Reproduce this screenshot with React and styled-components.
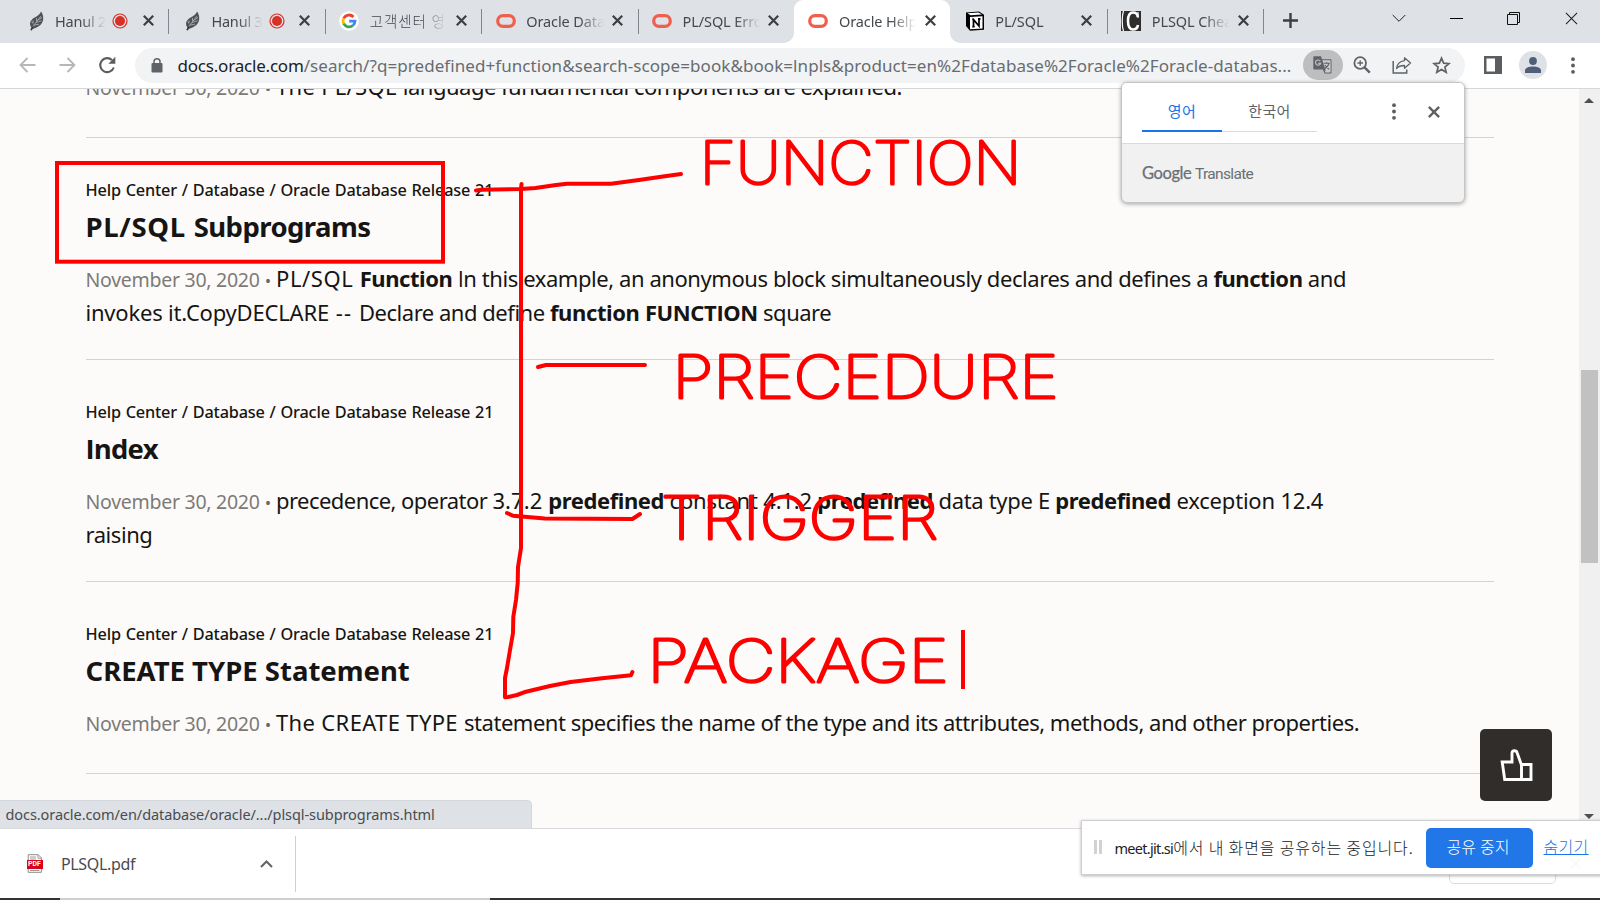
import React from "react";
import styled, { createGlobalStyle } from "styled-components";

const UI = `"Noto Sans", "Noto Sans CJK KR", sans-serif`;
const RED = "#ff0000";

const Global = createGlobalStyle`
  * { box-sizing: border-box; }
  html, body { margin: 0; padding: 0; overflow: hidden; }
  body { font-family: ${UI}; background: #fff; color: #161513; }
  svg { display: block; flex: none; }
`;

const Desktop = styled.div`
  position: relative;
  width: 1600px;
  height: 900px;
  display: flex;
  flex-direction: column;
  overflow: hidden;
  background: #fff;
`;

/* ---------- tab strip ---------- */
const TabStrip = styled.header`
  height: 43px;
  flex: none;
  display: flex;
  padding-left: 12px;
  background: #dee1e6;
`;

const TabBox = styled.div`
  position: relative;
  width: 156.4px;
  height: 43px;
  padding: 0 9px 2px 14px;
  display: flex;
  align-items: center;
  background: ${(p) => (p.$active ? "#fff" : "transparent")};
  border-radius: 9px 9px 0 0;
  &::before, &::after {
    content: "";
    display: ${(p) => (p.$active ? "block" : "none")};
    position: absolute;
    bottom: 0;
    width: 10px;
    height: 10px;
  }
  &::before { left: -10px; background: radial-gradient(circle at 0 0, transparent 9.5px, #fff 10px); }
  &::after { right: -10px; background: radial-gradient(circle at 100% 0, transparent 9.5px, #fff 10px); }
`;

const TabDivider = styled.i`
  position: absolute;
  right: -1px;
  top: 9px;
  width: 1px;
  height: 25px;
  background: #80868b;
`;

const Favicon = styled.span`
  width: 21px;
  height: 20px;
  display: flex;
  align-items: center;
  justify-content: center;
`;

const TabTitle = styled.span`
  flex: 1;
  min-width: 0;
  margin: 0 3px 0 ${(p) => (p.$tight ? 8 : 10)}px;
  overflow: hidden;
  white-space: nowrap;
  font-size: 14.5px;
  font-weight: ${(p) => (p.$korean ? 300 : 400)};
  letter-spacing: ${(p) => p.$ls || -0.1}px;
  line-height: 24px;
  color: #45494d;
  mask-image: linear-gradient(to right, #000 calc(100% - 25px), transparent);
`;

const TabRecording = styled.span`
  width: 16px;
  margin: 0 9px 0 3px;
`;

const TabClose = styled.span`
  width: 22px;
  display: flex;
  justify-content: center;
`;

const NewTab = styled.span`
  width: 55px;
  height: 41px;
  display: flex;
  align-items: center;
  justify-content: center;
`;

const WindowControls = styled.div`
  margin-left: auto;
  height: 36px;
  display: flex;
  align-items: center;
`;

const WindowButton = styled.span`
  width: 57.5px;
  height: 36px;
  display: flex;
  align-items: center;
  justify-content: center;
`;

/* ---------- toolbar ---------- */
const Toolbar = styled.div`
  height: 46px;
  flex: none;
  display: flex;
  align-items: center;
  padding: 0 7px 1px;
  background: #fff;
  border-bottom: 1px solid #d5d7da;
`;

const NavButton = styled.span`
  width: 40px;
  display: flex;
  justify-content: center;
`;

const Omnibox = styled.div`
  width: 1330px;
  flex: none;
  height: 35px;
  margin-left: 8px;
  padding: 0 3px 0 16px;
  display: flex;
  align-items: center;
  background: #f1f3f4;
  border-radius: 18px;
`;

const Url = styled.div`
  width: 1125px;
  margin-left: 14.5px;
  padding-top: 1px;
  white-space: nowrap;
  font-size: 17px;
  line-height: 30px;
  letter-spacing: 0.07px;
  color: #686c71;
`;

const Domain = styled.span`
  color: #202124;
  letter-spacing: -0.2px;
`;

const TranslatePill = styled.span`
  width: 40px;
  height: 30px;
  display: flex;
  align-items: center;
  justify-content: center;
  border-radius: 15px;
  background: #bdbebf;
`;

const OmniAction = styled.span`
  width: 39.6px;
  display: flex;
  justify-content: center;
`;

const ToolbarActions = styled.div`
  margin-left: 7.5px;
  display: flex;
  align-items: center;
`;

const ToolbarAction = styled.span`
  width: 40px;
  display: flex;
  justify-content: center;
`;

const Avatar = styled.span`
  width: 28px;
  height: 28px;
  margin: 0 6px;
  display: flex;
  align-items: center;
  justify-content: center;
  border-radius: 50%;
  background: #dee1e6;
`;

/* ---------- page ---------- */
const Viewport = styled.main`
  position: relative;
  height: 739px;
  flex: none;
  display: flex;
  overflow: hidden;
  background: #fcfbfa;
`;

const ResultList = styled.section`
  width: 1408px;
  margin: -20px 85px 0 86px;
  flex: none;
`;

const Result = styled.article`
  padding: ${(p) => (p.$first ? 0 : 42)}px 0 ${(p) => (p.$short ? 34 : 30)}px;
  border-bottom: 1px solid #d4d3d1;
`;

const Breadcrumb = styled.div`
  height: 20px;
  line-height: 20px;
  margin-left: -0.5px;
  font-size: 16.3px;
  font-weight: 500;
  letter-spacing: -0.18px;
  word-spacing: 0.8px;
  white-space: nowrap;
`;

const Title = styled.h2`
  height: 36px;
  margin: 9px 0 16px -0.5px;
  line-height: 36px;
  font-family: ${(p) => (p.$plain ? `"Open Sans", sans-serif` : UI)};
  font-size: 27.5px;
  font-weight: 700;
  letter-spacing: ${(p) => p.$ls || 0}px;
  white-space: nowrap;
`;

const Snippet = styled.p`
  margin: 0 0 0 -0.5px;
  font-size: 22px;
  line-height: 34px;
  white-space: pre;
`;

const DateText = styled.span`
  display: inline-block;
  width: 190.5px;
  font-size: 19.5px;
  line-height: 20px;
  letter-spacing: -0.27px;
  color: #7d7a76;
`;

const Dot = styled.span`
  margin-left: 5.5px;
  font-size: 16px;
  color: #6b6763;
`;

const Run = styled.span`
  letter-spacing: ${(p) => p.$ls || 0}px;
`;

const Match = styled.b`
  letter-spacing: ${(p) => p.$ls || 0}px;
`;

const PlainCap = styled.span`
  font-family: "Open Sans", sans-serif;
`;

const Scrollbar = styled.aside`
  width: 21px;
  height: 739px;
  display: flex;
  flex-direction: column;
  align-items: center;
  justify-content: space-between;
  padding: 9px 1px 9px 0;
  background: #f0f0f0;
`;

const Thumb = styled.i`
  width: 17px;
  height: 193px;
  margin-top: 16px;
  background: #c1c1c1;
`;

const Feedback = styled.div`
  position: absolute;
  left: 1480px;
  top: 640px;
  width: 72px;
  height: 72px;
  display: flex;
  align-items: center;
  justify-content: center;
  border-radius: 5px;
  background: #312d2a;
`;

const StatusBubble = styled.div`
  position: absolute;
  left: 0;
  bottom: 0;
  width: 532px;
  height: 28px;
  padding-left: 5.5px;
  border: solid #d3d6da;
  border-width: 1px 1px 0 0;
  border-radius: 0 5px 0 0;
  background: #dee1e6;
  font-size: 14.5px;
  line-height: 27px;
  letter-spacing: -0.075px;
  color: #494c50;
`;

/* ---------- downloads shelf ---------- */
const Shelf = styled.footer`
  height: 70px;
  flex: none;
  display: flex;
  align-items: center;
  border-top: 1px solid #d9dbde;
  background: #fff;
`;

const DownloadItem = styled.div`
  width: 296px;
  height: 56px;
  padding: 0 22px 0 27px;
  display: flex;
  align-items: center;
  border-right: 1px solid #cdcfd1;
`;

const FileName = styled.span`
  flex: 1;
  margin-left: 18px;
  font-size: 16px;
  letter-spacing: -0.35px;
  color: #484b4f;
`;

const ShowAll = styled.span`
  width: 107px;
  height: 40px;
  margin: 0 14px 0 auto;
  border: 1px solid #dadce0;
  border-radius: 5px;
  text-align: center;
  line-height: 34px;
  font-size: 15px;
  font-weight: 300;
  color: #1a73e8;
`;

const ShelfClose = styled.span`
  width: 30px;
`;

const DesktopEdge = styled.div`
  height: 2px;
  flex: none;
  background: linear-gradient(to right, #333436 60px, #cfcfcf 60px, #cfcfcf 490px, #333436 490px);
`;

/* ---------- translate popup ---------- */
const TranslatePopup = styled.section`
  position: absolute;
  left: 1121px;
  top: 82px;
  width: 344px;
  height: 121px;
  border: 1px solid #c4c6c6;
  border-radius: 6px;
  overflow: hidden;
  background: #f1f1f1;
  box-shadow: 0 1px 4px rgba(0, 0, 0, 0.35);
`;

const PopupHeader = styled.div`
  height: 61px;
  padding: 9px 24px 0 20px;
  display: flex;
  align-items: flex-start;
  background: #fff;
  border-bottom: 1px solid #d9dadb;
`;

const LangTab = styled.span`
  width: ${(p) => (p.$active ? 80 : 95)}px;
  height: 40px;
  text-align: center;
  line-height: 39px;
  font-size: 15px;
  letter-spacing: 0.4px;
  color: ${(p) => (p.$active ? "#1a73e8" : "#5f6368")};
  box-shadow: inset 0 ${(p) => (p.$active ? "-2px #1a73e8" : "-1px #dadce0")};
`;

const PopupActions = styled.span`
  margin: 11px 0 0 auto;
  display: flex;
  align-items: center;
  gap: 32px;
`;

const Brand = styled.div`
  padding: 16px 0 0 20px;
  font-family: Lato, sans-serif;
  font-size: 16.5px;
  line-height: 26px;
  letter-spacing: -0.4px;
  color: #6b6f73;
  -webkit-text-stroke: 0.25px #6b6f73;
`;

const BrandProduct = styled.span`
  margin-left: 3.5px;
  font-family: Roboto, sans-serif;
  font-size: 15.5px;
  letter-spacing: -0.65px;
  -webkit-text-stroke: 0;
`;

/* ---------- screen share bar ---------- */
const ShareBar = styled.div`
  position: absolute;
  left: 1081px;
  top: 820px;
  width: 530px;
  height: 55px;
  padding: 0 0 2px 12px;
  display: flex;
  align-items: center;
  background: rgba(255, 255, 255, 0.96);
  border: 1px solid #cfcfcf;
  box-shadow: 0 1px 3px rgba(0, 0, 0, 0.3);
`;

const Grip = styled.i`
  width: 8px;
  height: 14px;
  border: solid #d2d2d2;
  border-width: 0 3px;
`;

const ShareText = styled.span`
  width: 311px;
  margin-left: 12.5px;
  white-space: nowrap;
  font-family: "Noto Sans CJK KR", sans-serif;
  font-size: 16px;
  font-weight: 300;
  letter-spacing: 0.85px;
  color: #202124;
`;

const ShareHost = styled.span`
  font-family: "Noto Sans", sans-serif;
  font-size: 14.5px;
  font-weight: 400;
  letter-spacing: -0.7px;
`;

const StopButton = styled.span`
  width: 107px;
  height: 40px;
  margin-top: 2px;
  border-radius: 5px;
  background: #2277e8;
  color: #fff;
  padding-right: 2px;
  text-align: center;
  font-size: 16px;
  font-weight: 300;
  line-height: 38px;
`;

const HideLink = styled.span`
  margin: -1px 0 0 11px;
  font-size: 16px;
  font-weight: 300;
  letter-spacing: 0.3px;
  color: #1a73e8;
  text-decoration: underline;
`;

const Annotations = styled.svg`
  position: absolute;
  left: 0;
  top: 0;
  pointer-events: none;
`;

/* ---------- icons ---------- */
const Cross = ({ size = 11, color = "#3c4043", w = 2.2 }) => (
  <svg width={size} height={size} viewBox="0 0 11 11" stroke={color} strokeWidth={w} fill="none">
    <path d="M.8.8l9.4 9.4M10.2.8L.8 10.2" />
  </svg>
);

const Feather = () => (
  <svg width="16" height="20" viewBox="0 0 16 20">
    <path d="M12 .5C13.5 2.500 14.500 5 14.200 8c-.3 4-3 7-6.700 8.500L3.800 18l-1.600 1.700-.7-1L2.300 16.500C.3 13.500.6 10.500 3 8.500 5.500 6 10.500 5 12 .5z" fill="#505355" />
    <path d="M3 16.500L12 5M5 14l5-.8M7 11.500l5.500-1.800M9 9l4-2.500M4 12V9.500M7.500 10V7M2.500 11l1.800 1.500" stroke="#b5b8bb" strokeWidth=".8" fill="none" />
    <path d="M2 19l2-3.500" stroke="#333" strokeWidth="1.200" />
  </svg>
);

const GoogleG = () => (
  <svg width="20" height="20" viewBox="0 0 20 20">
    <circle cx="10" cy="10" r="9.800" fill="#fff" />
    <g fill="none" strokeWidth="2.800">
      <path d="M14.500 6A6 6 0 0 0 4.700 7.300" stroke="#ea4335" />
      <path d="M4.700 7.200a6 6 0 0 0 0 5.600" stroke="#fbbc05" />
      <path d="M4.700 12.700a6 6 0 0 0 9.200 1.800" stroke="#34a853" />
      <path d="M13.900 14.500A6 6 0 0 0 16 10.200H10.200" stroke="#4285f4" />
    </g>
  </svg>
);

const OracleO = () => (
  <svg width="20" height="14" viewBox="0 0 20 14">
    <rect x="1.700" y="1.700" width="16.600" height="10.600" rx="5.300" fill="none" stroke="#f05f4c" strokeWidth="3.200" />
  </svg>
);

const NotionIcon = () => (
  <svg width="20" height="20" viewBox="0 0 20 20">
    <path d="M1 1.500L14 .5l5 3.300v15L5 19.700 1 15z" fill="#000" />
    <path d="M2.500 2.200l11-.8 3.300 2.200-11.300.7z" fill="#fff" />
    <path d="M5 6l12.500-.8v12.200L5 18.200z" fill="#fff" />
    <path d="M8.500 15.500V8.600l5.500 6.400V7.800M7.300 8.500h2M13 7.800h2.500M7.300 15.600h2.400" fill="none" stroke="#000" strokeWidth="1.700" />
  </svg>
);

const CheatIcon = () => (
  <svg width="20" height="20" viewBox="0 0 20 20">
    <rect width="20" height="20" fill="#2e2e2e" />
    <path d="M2.500 0C.8 5 .8 15 2.500 20" stroke="#fff" strokeWidth="1.200" fill="none" />
    <path d="M16.800 6C16.500 3 14.500 1.500 12 1.500 8.500 1.500 7 5.500 7 10s1.500 8.500 5 8.500c2.500 0 4.500-1.500 5-4.500" stroke="#fff" strokeWidth="2.600" fill="none" />
    <path d="M17 1v6" stroke="#fff" strokeWidth="1.200" />
  </svg>
);

const RecIcon = () => (
  <svg width="16" height="16" viewBox="0 0 16 16">
    <circle cx="8" cy="8" r="7" fill="none" stroke="#d93025" strokeWidth="1.200" />
    <circle cx="8" cy="8" r="5" fill="#d93025" />
  </svg>
);

const Arrow = ({ flip }) => (
  <svg width="17" height="16" viewBox="0 0 17 16" fill="none" stroke="#b5b7ba" strokeWidth="1.800">
    <path d={flip ? "M.5 8H15M8.500 1l7 7-7 7" : "M16.500 8H2M8.500 1l-7 7 7 7"} />
  </svg>
);

const Reload = () => (
  <svg width="18" height="18" viewBox="0 0 18 18">
    <path d="M15.800 11.500A7 7 0 1 1 14 4" fill="none" stroke="#5a5e62" strokeWidth="2.100" />
    <path d="M17.300.8v7H10.300z" fill="#5a5e62" />
  </svg>
);

const Lock = () => (
  <svg width="12" height="15" viewBox="0 0 12 15">
    <rect x=".5" y="5" width="11" height="9.500" rx="1" fill="#5f6368" />
    <path d="M3 6V3.800a3 3 0 0 1 6 0V6" fill="none" stroke="#5f6368" strokeWidth="1.500" />
  </svg>
);

const TranslateIcon = () => (
  <svg width="19" height="18" viewBox="0 0 19 18">
    <path d="M1.500.3H8l1 3h8.300c.8 0 1.200.5 1.200 1.200v11.700c0 .8-.4 1.300-1.200 1.300h-6l-1.300-4H1.500C.7 13.500.3 13 .3 12.200V1.500C.3.700.7.300 1.500.3z" fill="#5f6368" />
    <path d="M9.400 4.300h7.700c.3 0 .5.200.5.500v11.200c0 .3-.2.500-.5.500h-5.500l1-2.500z" fill="#c9cacb" />
    <path d="M7.300 5.200A2.600 2.600 0 1 0 7.600 7.300H5.200" fill="none" stroke="#bdbebf" strokeWidth="1.200" />
    <path d="M10.600 7.200h6.200M13.700 6v1.200M15.800 7.500c-.5 2.500-2 4-4.300 5.300M12 9c1 1.800 2.300 3 4.200 4.200" fill="none" stroke="#5f6368" strokeWidth="1.100" />
  </svg>
);

const ZoomIcon = () => (
  <svg width="18" height="18" viewBox="0 0 18 18" fill="none" stroke="#5f6368">
    <circle cx="7.200" cy="7" r="5.800" strokeWidth="1.800" />
    <path d="M11.500 11.300l5.300 5.300" strokeWidth="2.400" />
    <path d="M4.400 7H10M7.200 4.200v5.600" strokeWidth="1.300" />
  </svg>
);

const ShareIcon = () => (
  <svg width="20" height="18" viewBox="0 0 20 18" fill="none" stroke="#5f6368" strokeWidth="1.500">
    <path d="M1.200 5v12h13.500v-3.500" />
    <path d="M12.500 1.800l6 5.200-6 5.200V9.500c-4 0-6.300 1-8 3C5 8.500 7.500 5.300 12.500 4.600z" strokeLinejoin="round" strokeWidth="1.300" />
  </svg>
);

const Star = () => (
  <svg width="19" height="18" viewBox="0 0 19 18">
    <path d="M9.500 2.200l2.100 5 5.400.4-4.100 3.500 1.300 5.200-4.700-2.800-4.700 2.800 1.300-5.200L2 7.600l5.400-.4z" fill="none" stroke="#5f6368" strokeWidth="1.700" />
  </svg>
);

const SidePanel = () => (
  <svg width="18" height="18" viewBox="0 0 18 18">
    <rect width="18" height="18" fill="#5a5e62" />
    <rect x="2.500" y="2.500" width="8.500" height="13" fill="#fff" />
  </svg>
);

const Person = () => (
  <svg width="16" height="16" viewBox="0 0 16 16" fill="#505f79">
    <circle cx="8" cy="4" r="3.900" />
    <path d="M0 16v-2.500C0 10.800 4 9.600 8 9.600s8 1.200 8 3.900V16z" />
  </svg>
);

const Dots = () => (
  <svg width="4" height="17" viewBox="0 0 4 17" fill="#5a5e62">
    <circle cx="2" cy="2.200" r="1.900" />
    <circle cx="2" cy="8.500" r="1.900" />
    <circle cx="2" cy="14.800" r="1.900" />
  </svg>
);

const ThumbUp = () => (
  <svg width="33" height="33" viewBox="0 0 33 33" fill="none" stroke="#fff" strokeWidth="2.900">
    <path d="M21.500 16L17 3.500C16.300 1 12.200 1 12 4v9H2.200l2.500 17.500H31V15.500H21.500v15" />
  </svg>
);

const PdfLabel = styled.span`
  position: absolute;
  left: -0.5px;
  top: 6px;
  width: 16px;
  height: 9px;
  background: #d9001b;
  color: #fff;
  font-family: Roboto, sans-serif;
  font-size: 7px;
  font-weight: 700;
  line-height: 9px;
  text-align: center;
`;

const PdfBox = styled.span`
  position: relative;
  width: 16px;
`;

const PdfIcon = () => (
  <PdfBox>
    <svg width="16" height="19" viewBox="0 0 16 19">
      <path d="M1.200.7h10l3.200 3.200v14.400H1.200z" fill="#fff" stroke="#8d8d8d" />
      <path d="M11 .7v3.500h3.500M3 3h6M3 5h6M3 16.500h9.500" fill="none" stroke="#9a9a9a" />
    </svg>
    <PdfLabel>PDF</PdfLabel>
  </PdfBox>
);

const tabs = [
  { icon: <Feather />, title: "Hanul 2", rec: true, divider: true, ls: -0.2 },
  { icon: <Feather />, title: "Hanul 3", rec: true, divider: true, ls: -0.2 },
  { icon: <GoogleG />, title: "고객센터 영", divider: true, ls: 0.9, korean: true },
  { icon: <OracleO />, title: "Oracle Data", divider: true },
  { icon: <OracleO />, title: "PL/SQL Error" },
  { icon: <OracleO />, title: "Oracle Help", active: true },
  { icon: <NotionIcon />, title: "PL/SQL", divider: true },
  { icon: <CheatIcon />, title: "PLSQL Cheat", divider: true },
];

const Tab = ({ tab }) => (
  <TabBox $active={tab.active}>
    <Favicon>{tab.icon}</Favicon>
    <TabTitle $ls={tab.ls} $korean={tab.korean} $tight={tab.rec}>{tab.title}</TabTitle>
    {tab.rec && <TabRecording><RecIcon /></TabRecording>}
    <TabClose><Cross /></TabClose>
    {tab.divider && <TabDivider />}
  </TabBox>
);

const Stamp = () => (
  <DateText>November 30, 2020<Dot>•</Dot></DateText>
);

const CRUMBS = "Help Center / Database / Oracle Database Release 21";

export default function App() {
  return (
    <Desktop>
      <Global />
      <TabStrip>
        {tabs.map((tab, i) => <Tab key={i} tab={tab} />)}
        <NewTab>
          <svg width="15" height="15" stroke="#3c4043" strokeWidth="2.400"><path d="M7.500 0v15M0 7.500h15" /></svg>
        </NewTab>
        <WindowControls>
          <WindowButton><svg width="14" height="9" fill="none" stroke="#222"><path d="M.7 1l6.300 6.300L13.300 1" /></svg></WindowButton>
          <WindowButton><svg width="13" height="1"><rect width="13" height="1" /></svg></WindowButton>
          <WindowButton>
            <svg width="13" height="13" fill="none" stroke="#111"><path d="M.5 2.500h10v10H.5zM2.500 2.500v-2h10v10h-2" /></svg>
          </WindowButton>
          <WindowButton><Cross size={13} color="#222" w={0.9} /></WindowButton>
        </WindowControls>
      </TabStrip>

      <Toolbar>
        <NavButton><Arrow /></NavButton>
        <NavButton><Arrow flip /></NavButton>
        <NavButton><Reload /></NavButton>
        <Omnibox>
          <Lock />
          <Url>
            <Domain>docs.oracle.com</Domain>
            /search/?q=predefined+function&amp;search-scope=book&amp;book=lnpls&amp;product=en%2Fdatabase%2Foracle%2Foracle-databas...
          </Url>
          <TranslatePill><TranslateIcon /></TranslatePill>
          <OmniAction><ZoomIcon /></OmniAction>
          <OmniAction><ShareIcon /></OmniAction>
          <OmniAction><Star /></OmniAction>
        </Omnibox>
        <ToolbarActions>
          <ToolbarAction><SidePanel /></ToolbarAction>
          <Avatar><Person /></Avatar>
          <ToolbarAction><Dots /></ToolbarAction>
        </ToolbarActions>
      </Toolbar>

      <Viewport>
        <ResultList>
          <Result $first $short>
            <Snippet>
              <Stamp />
              <Run $ls={0.3}>The PL/SQL </Run>
              <Run $ls={-0.5}>language fundamental components are explained.</Run>
            </Snippet>
          </Result>
          <Result>
            <Breadcrumb>{CRUMBS}</Breadcrumb>
            <Title $ls={-0.57}><Run $ls={0.7}>PL/SQL </Run>Subprograms</Title>
            <Snippet>
              <Stamp />
              <Run $ls={0.6}>PL/SQL </Run>
              <Match $ls={-0.45}>Function</Match>
              <Run $ls={-0.43}> <PlainCap>I</PlainCap>n this example, an anonymous block simultaneously declares and defines a </Run>
              <Match $ls={-0.45}>function</Match>
              <Run $ls={-0.4}> and</Run>
              {"\n"}
              <Run $ls={-0.2}>invokes it.CopyDECLARE</Run>
              <Run $ls={1.1}> -- </Run>
              <Run $ls={-0.47}>Declare and define </Run>
              <Match $ls={-0.38}>function FUNCT<PlainCap>I</PlainCap>ON</Match>
              <Run $ls={-0.5}> square</Run>
            </Snippet>
          </Result>
          <Result>
            <Breadcrumb>{CRUMBS}</Breadcrumb>
            <Title $plain $ls={-0.9}>Index</Title>
            <Snippet>
              <Stamp />
              <Run $ls={-0.55}>precedence, operator </Run>
              <Run $ls={0.1}>3.7.2 </Run>
              <Match $ls={-0.42}>predefined</Match>
              <Run $ls={-0.2}> constant 4.1.2 </Run>
              <Match $ls={-0.42}>predefined</Match>
              <Run $ls={-0.32}> data type E </Run>
              <Match $ls={-0.42}>predefined</Match>
              <Run $ls={-0.2}> exception 12.4</Run>
              {"\n"}
              <Run $ls={-0.45}>raising</Run>
            </Snippet>
          </Result>
          <Result $short>
            <Breadcrumb>{CRUMBS}</Breadcrumb>
            <Title>CREATE TYPE Statement</Title>
            <Snippet>
              <Stamp />
              <Run $ls={0.35}>The CREATE TYPE </Run>
              <Run $ls={-0.48}>statement specifies the name of the type and its attributes, methods, and other properties.</Run>
            </Snippet>
          </Result>
        </ResultList>
        <Scrollbar>
          <svg width="10" height="5" fill="#505050"><path d="M5 0l5 5H0z" /></svg>
          <Thumb />
          <svg width="10" height="5" fill="#505050"><path d="M5 5l5-5H0z" /></svg>
        </Scrollbar>
        <Feedback><ThumbUp /></Feedback>
        <StatusBubble>docs.oracle.com/en/database/oracle/.../plsql-subprograms.html</StatusBubble>
      </Viewport>

      <Shelf>
        <DownloadItem>
          <PdfIcon />
          <FileName>PLSQL.pdf</FileName>
          <svg width="13" height="8" fill="none" stroke="#5f6368" strokeWidth="2"><path d="M1 7l5.500-5.500L12 7" /></svg>
        </DownloadItem>
        <ShowAll>모두 표시</ShowAll>
        <ShelfClose><Cross color="#5f6368" /></ShelfClose>
      </Shelf>
      <DesktopEdge />

      <TranslatePopup>
        <PopupHeader>
          <LangTab $active>영어</LangTab>
          <LangTab>한국어</LangTab>
          <PopupActions><Dots /><Cross size={12} color="#5f6368" /></PopupActions>
        </PopupHeader>
        <Brand>Google<BrandProduct>Translate</BrandProduct></Brand>
      </TranslatePopup>

      <Annotations width="1600" height="900" fill="none" stroke={RED} strokeWidth="4">
        <rect x="57" y="163" width="386" height="98.700" />
        <g strokeLinecap="round" strokeLinejoin="round">
          <path d="M476 190.500L482 189.700 521 189 535.500 188 556 185 567 183.700H611L639 180 663 176.500 681 174" />
          <path d="M521.500 184L521 190V548L518 567 517.700 583 516 600 513.300 617 513 633 510 650 507 668 505 678V697.300L508 697 517 695 526 691.700 550 686 570.600 682 602 678.300 631 675.300 632.400 672" />
          <path d="M538 367L546 365H645" />
          <path d="M507 513L513 515.700 544.700 518.500 632.400 519 640 514" />
        </g>
        <path d="M963 630V689" />
        <g fontFamily="Inter, sans-serif" fontWeight="100" fontSize="58.500" fill={RED} strokeWidth="3" strokeLinejoin="round">
          <text x="699.800" y="183.500" textLength="321.500" lengthAdjust="spacingAndGlyphs">FUNCTION</text>
          <text x="672.500" y="398" textLength="386" lengthAdjust="spacingAndGlyphs">PRECEDURE</text>
          <text x="661" y="539" textLength="277" lengthAdjust="spacingAndGlyphs">TRIGGER</text>
          <text x="647.500" y="681.500" textLength="301" lengthAdjust="spacingAndGlyphs">PACKAGE</text>
        </g>
      </Annotations>

      <ShareBar>
        <Grip />
        <ShareText><ShareHost>meet.jit.si</ShareHost>에서 내 화면을 공유하는 중입니다.</ShareText>
        <StopButton>공유 중지</StopButton>
        <HideLink>숨기기</HideLink>
      </ShareBar>
    </Desktop>
  );
}
